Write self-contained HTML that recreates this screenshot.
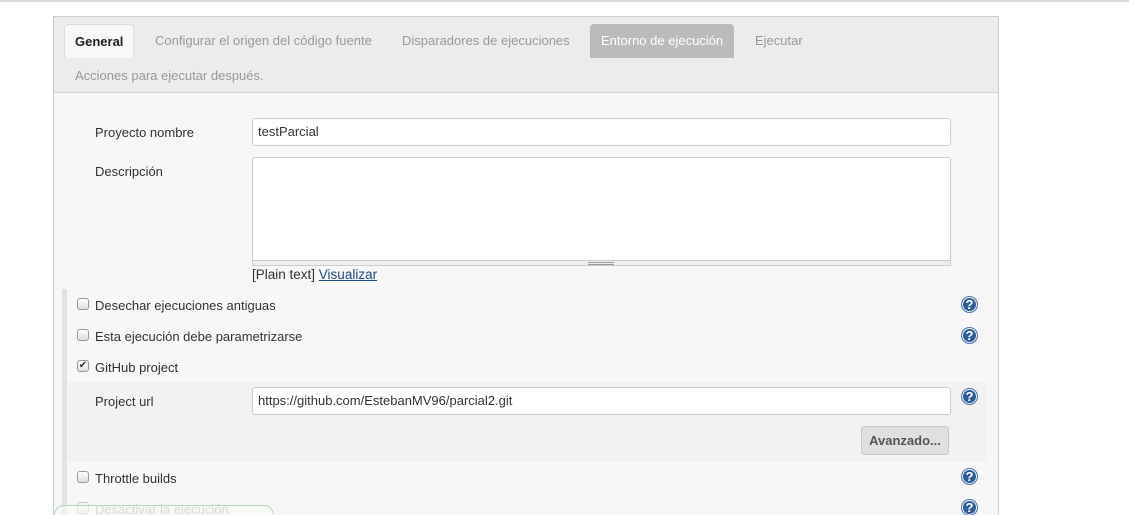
<!DOCTYPE html>
<html><head><meta charset="utf-8"><style>
*{box-sizing:border-box;margin:0;padding:0}
html,body{width:1129px;height:515px;overflow:hidden}
body{background:#fff;font-family:"Liberation Sans",Arial,sans-serif;font-size:13px;color:#333;position:relative}
.a{position:absolute;white-space:nowrap}
.tab{position:absolute;top:24px;height:34px;line-height:33px;padding:0 11px;color:#999;font-size:13px;white-space:nowrap}
.lbl{position:absolute;left:95px;font-size:13px;color:#333;white-space:nowrap}
.inp{position:absolute;left:252px;width:699px;height:28px;background:#fff;border:1px solid #ccc;border-radius:3px;padding:0 5px;line-height:26px;font-size:13px;color:#333}
.cb{position:absolute;left:77px;width:12px;height:12px;border:1px solid #999;border-radius:3px;background:linear-gradient(#fff,#ddd)}
.help{position:absolute;left:961px;width:17px;height:17px;border-radius:50%;background:#2d5c9a;border:1px solid #5077ad;box-shadow:inset 0 0 0 1px #fff;color:#fff;font-weight:bold;font-size:13px;line-height:15px;text-align:center}
</style></head><body>
<div class="a" style="left:0;top:0;width:1129px;height:2px;background:#ddd"></div>
<div class="a" style="left:53px;top:16px;width:946px;height:520px;border:1px solid #ccc;background:#f7f7f7"></div>
<div class="a" style="left:54px;top:17px;width:944px;height:76px;background:#ececec;border-bottom:1px solid #d6d6d6"></div>
<div class="tab" style="left:64px;width:70px;background:#f8f8f8;border:1px solid #ddd;border-bottom:none;border-radius:4px 4px 0 0;color:#222;padding:0 10px;font-weight:bold">General</div>
<div class="tab" style="left:144px">Configurar el origen del código fuente</div>
<div class="tab" style="left:391px">Disparadores de ejecuciones</div>
<div class="tab" style="left:590px;width:144px;background:#bbb;color:#fff;border-radius:4px 4px 0 0">Entorno de ejecución</div>
<div class="tab" style="left:744px">Ejecutar</div>
<div class="a" style="left:75px;top:68px;color:#999">Acciones para ejecutar después.</div>

<div class="lbl" style="top:125px">Proyecto nombre</div>
<div class="inp" style="top:118px">testParcial</div>
<div class="lbl" style="top:164px">Descripción</div>
<div class="a" style="left:252px;top:157px;width:699px;height:109px;background:#fff;border:1px solid #ccc;border-radius:3px"></div>
<div class="a" style="left:252px;top:260px;width:699px;height:6px;background:#eee;border:1px solid #ccc"></div>
<div class="a" style="left:588px;top:262px;width:26px;height:3px;border-top:1px solid #999;border-bottom:1px solid #999"></div>
<div class="a" style="left:252px;top:267px;font-size:13.5px">[Plain text] <span style="color:#204a87;text-decoration:underline">Visualizar</span></div>

<div class="a" style="left:62px;top:289px;width:5px;height:230px;background:#e2e2e2"></div>
<div class="cb" style="top:298px"></div><div class="lbl" style="top:298px">Desechar ejecuciones antiguas</div>
<div class="help" style="top:296px">?</div>
<div class="cb" style="top:329px"></div><div class="lbl" style="top:329px">Esta ejecución debe parametrizarse</div>
<div class="help" style="top:327px">?</div>
<div class="cb" style="top:360px;font-size:10px;line-height:10px;text-align:center;color:#333">✔</div><div class="lbl" style="top:360px">GitHub project</div>
<div class="a" style="left:67px;top:382px;width:920px;height:80px;background:#f2f2f2"></div>
<div class="lbl" style="top:394px">Project url</div>
<div class="inp" style="top:387px">https://github.com/EstebanMV96/parcial2.git</div>
<div class="help" style="top:388px">?</div>
<div class="a" style="left:861px;top:426px;width:88px;height:29px;background:#e0e0e0;border:1px solid #c8c8c8;border-radius:3px;font-weight:bold;color:#555;text-align:center;line-height:27px">Avanzado...</div>
<div class="cb" style="top:471px"></div><div class="lbl" style="top:471px">Throttle builds</div>
<div class="help" style="top:468px">?</div>
<div class="cb" style="top:502px;opacity:.5"></div><div class="lbl" style="top:502px;color:#aaa">Desactivar la ejecución</div>
<div class="help" style="top:499px">?</div>
<div class="a" style="left:54px;top:505px;width:220px;height:20px;border:1px solid #b5d6b5;border-radius:10px;background:rgba(245,250,245,.6)"></div>
</body></html>
